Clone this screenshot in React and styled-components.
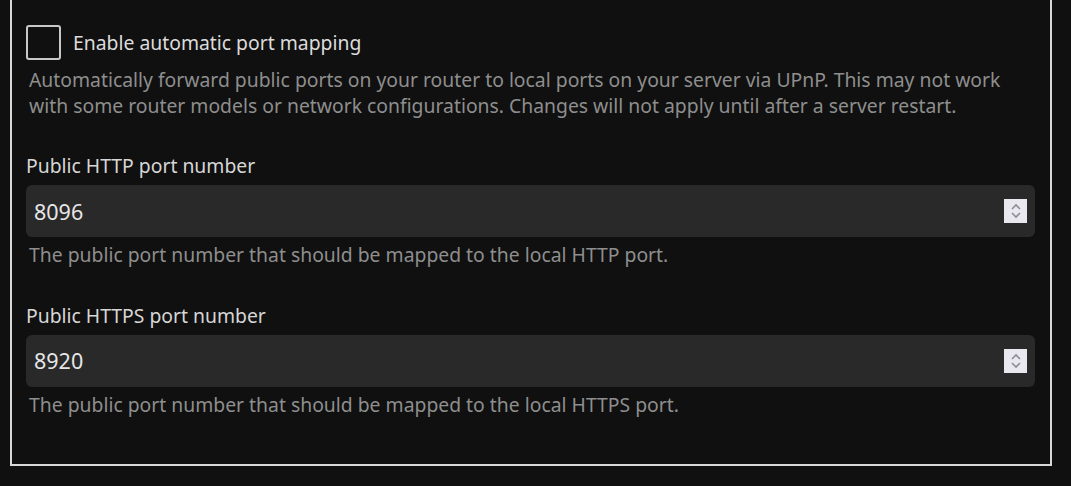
import styled, { createGlobalStyle } from 'styled-components'

const Global = createGlobalStyle`
html, body {
  margin: 0;
  background: #101010;
  font-family: "Noto Sans", "Open Sans", sans-serif;
}
`;

const Fieldset = styled.div`
box-sizing: border-box;
margin-left: 10px;
width: 1042px;
border: 2px solid #d8d8d8;
border-top: 0;
padding: 25px 15px 47px 14px;
display: flex;
flex-direction: column;
`;

const CheckRow = styled.label`
display: flex;
align-items: center;
gap: 12px;
height: 35px;
color: #dcdcdc;
font-size: 19.35px;
`;

const Box = styled.span`
box-sizing: border-box;
width: 35px;
height: 35px;
border: 2px solid #c8c8c8;
border-radius: 3px;
`;

const Desc = styled.div`
color: #8e8e8e;
font-size: 19.35px;
line-height: 25.5px;
padding-left: 3px;
margin-top: ${props => props.top || 5}px;
`;

const Label = styled.div`
color: #d6d6d6;
font-size: 19.35px;
line-height: 24px;
margin-top: 36px;
margin-bottom: 7px;
`;

const InputBox = styled.div`
height: 52px;
background: #292929;
border-radius: 6px;
display: flex;
align-items: center;
justify-content: space-between;
padding: 0 8px 0 8px;
color: #e6e6e6;
font-size: 21.5px;
`;

const Spin = styled.div`
width: 23px;
height: 24px;
background: #e9e8ee;
display: flex;
align-items: center;
justify-content: center;
`;

const Spinner = () => (
    <Spin>
        <svg width="12" height="18" viewBox="0 0 12 18">
            <path d="M2 7 L6 3 L10 7" fill="none" stroke="#8d8c99" strokeWidth="1.6" />
            <path d="M2 11 L6 15 L10 11" fill="none" stroke="#8d8c99" strokeWidth="1.6" />
        </svg>
    </Spin>
)

const PortField = ({ label, value, desc }) => (
    <>
        <Label>{label}</Label>
        <InputBox>
            <span>{value}</span>
            <Spinner />
        </InputBox>
        <Desc top={5}>{desc}</Desc>
    </>
)

const App = () => {
    return (
        <>
            <Global />
            <Fieldset>
                <CheckRow>
                    <Box />
                    Enable automatic port mapping
                </CheckRow>
                <Desc top={7}>
                    Automatically forward public ports on your router to local ports on your server via UPnP. This may not work with some router models or network configurations. Changes will not apply until after a server restart.
                </Desc>
                <PortField label="Public HTTP port number" value="8096" desc="The public port number that should be mapped to the local HTTP port." />
                <PortField label="Public HTTPS port number" value="8920" desc="The public port number that should be mapped to the local HTTPS port." />
            </Fieldset>
        </>
    )
}

export default App
